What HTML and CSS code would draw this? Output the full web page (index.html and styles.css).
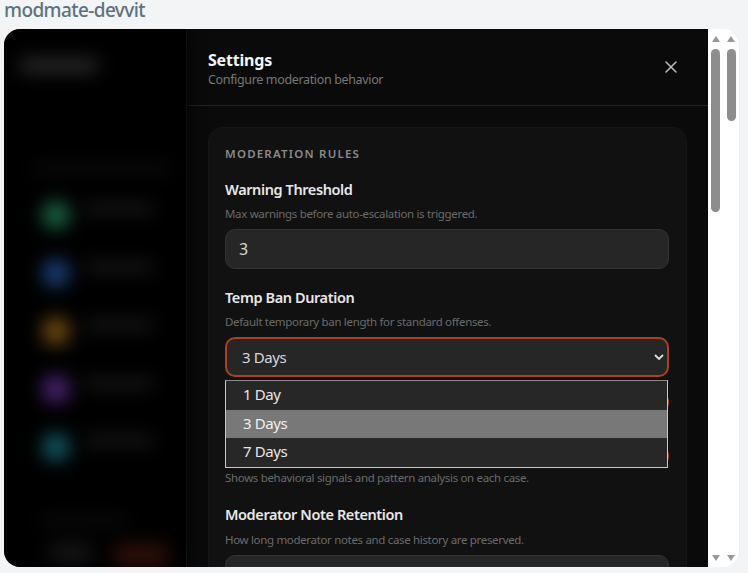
FILE: index.html
```html
<!DOCTYPE html>
<html lang="en">
<head>
<meta charset="utf-8">
<title>modmate-devvit</title>
<link rel="stylesheet" href="styles.css">
</head>
<body>
<h1 class="app-title">modmate-devvit</h1>
<div class="frame">
  <div class="app">
    <aside class="sidebar" aria-hidden="true">
      <div class="blur-logo"></div>
      <div class="blur-heading"></div>
      <div class="blur-list">
        <div class="blur-row"><span class="dot dot-green"></span><span class="bar"></span></div>
        <div class="blur-row"><span class="dot dot-blue"></span><span class="bar"></span></div>
        <div class="blur-row"><span class="dot dot-amber"></span><span class="bar"></span></div>
        <div class="blur-row"><span class="dot dot-purple"></span><span class="bar"></span></div>
        <div class="blur-row"><span class="dot dot-teal"></span><span class="bar"></span></div>
      </div>
      <div class="blur-foot"></div>
      <div class="blur-actions"><span class="btn-grey"></span><span class="btn-red"></span></div>
    </aside>
    <main class="panel">
      <header class="panel-head">
        <div>
          <h2 class="panel-title">Settings</h2>
          <p class="panel-sub">Configure moderation behavior</p>
        </div>
        <svg class="close" viewBox="0 0 12 12" width="12" height="12" aria-label="Close"><path d="M1 1l10 10M11 1L1 11"/></svg>
      </header>
      <div class="panel-body">
        <section class="card">
          <h3 class="card-title">MODERATION RULES</h3>
          <div class="field">
            <div class="label">Warning Threshold</div>
            <div class="hint">Max warnings before auto-escalation is triggered.</div>
            <input class="control control-number" value="3">
          </div>
          <div class="field">
            <div class="label">Temp Ban Duration</div>
            <div class="hint">Default temporary ban length for standard offenses.</div>
            <div class="select-wrap">
              <div class="control select" role="combobox" aria-expanded="true">
                <span>3 Days</span>
                <svg class="chevron" viewBox="0 0 10 7" width="10" height="7"><path d="M1 1l4 4 4-4"/></svg>
              </div>
              <ul class="popup">
                <li class="option">1 Day</li>
                <li class="option option-active">3 Days</li>
                <li class="option">7 Days</li>
              </ul>
            </div>
          </div>
          <div class="toggle-row toggle-row-first"><span class="toggle"></span></div>
          <div class="toggle-row toggle-row-second"><span class="toggle"></span></div>
          <div class="hint hint-toggle">Shows behavioral signals and pattern analysis on each case.</div>
          <div class="field field-last">
            <div class="label">Moderator Note Retention</div>
            <div class="hint">How long moderator notes and case history are preserved.</div>
            <input class="control">
          </div>
        </section>
      </div>
    </main>
  </div>
  <div class="scrollbar scrollbar-inner"><span class="arrow-up"></span><span class="thumb thumb-long"></span><span class="spacer"></span><span class="arrow-down"></span></div>
  <div class="scrollbar scrollbar-outer"><span class="arrow-up"></span><span class="thumb thumb-short"></span><span class="spacer"></span><span class="arrow-down"></span></div>
</div>
</body>
</html>
```

FILE: styles.css
```css
* { box-sizing: border-box; }
html, body { margin: 0; height: 100%; overflow: hidden; }
body {
  background: #f3f4f6;
  padding: 0 8px 6px 4px;
  font-family: "Noto Sans", "Open Sans", sans-serif;
  display: flex;
  flex-direction: column;
}
.app-title {
  margin: 0;
  height: 29px;
  font-size: 19px;
  line-height: 20px;
  letter-spacing: -0.6px;
  font-weight: 500;
  color: #5c7280;
  flex: none;
}
.frame {
  flex: 1;
  min-height: 0;
  display: flex;
  background: #fff;
  border-radius: 16px;
  overflow: hidden;
  border-right: 1px solid #eceef0;
}
.app { flex: 1; min-width: 0; display: flex; background: #000; }
.sidebar {
  width: 182px;
  flex: none;
  background: #000;
  display: flex;
  flex-direction: column;
  overflow: hidden;
  padding: 30px 0 0 16px;
  filter: blur(9px);
}
.blur-logo { width: 78px; height: 14px; background: #2e2e2e; border-radius: 4px; }
.blur-heading { width: 140px; height: 8px; margin: 93px 0 0 12px; background: #101010; }
.blur-list { display: flex; flex-direction: column; gap: 26px; margin: 27px 0 0 22px; }
.blur-row { display: flex; align-items: center; gap: 15px; height: 32px; }
.dot { width: 28px; height: 28px; border-radius: 50%; flex: none; }
.dot-green { background: #186443; }
.dot-blue { background: #1a3f78; }
.dot-amber { background: #6f4a10; }
.dot-purple { background: #492370; }
.dot-teal { background: #125663; }
.bar { width: 68px; height: 10px; margin-top: -12px; background: #1a1a1a; }
.blur-foot { width: 88px; height: 8px; margin: 54px 0 0 20px; background: #101010; }
.blur-actions { display: flex; gap: 22px; margin: 19px 0 0 30px; }
.btn-grey { width: 42px; height: 20px; background: #141414; }
.btn-red { width: 54px; height: 24px; background: #2c0e09; }
.panel {
  flex: 1;
  min-width: 0;
  background: #0a0a0a;
  border-left: 1px solid #1c1c1c;
  display: flex;
  flex-direction: column;
  overflow: hidden;
}
.panel-head {
  height: 77px;
  flex: none;
  display: flex;
  align-items: center;
  justify-content: space-between;
  padding: 2px 31px 0 21px;
  border-bottom: 1px solid #222;
}
.panel-title { margin: 0; font-size: 16px; line-height: 24px; font-weight: 700; letter-spacing: -0.2px; color: #f4f4f4; }
.panel-sub { margin: 0; font-size: 12.5px; line-height: 16px; letter-spacing: -0.35px; color: #777; }
.close { fill: none; stroke: #bdbdbd; stroke-width: 1.5; stroke-linecap: round; margin-bottom: 2px; }
.panel-body { flex: 1; min-height: 0; overflow: hidden; padding: 21px 21px 0; }
.card {
  background: #111;
  border: 1px solid #161616;
  border-radius: 14px;
  padding: 17px 17px 20px 16px;
}
.card-title {
  margin: 0 0 16px;
  font-size: 11.5px;
  line-height: 18px;
  font-weight: 600;
  letter-spacing: 1.2px;
  color: #8a8a8a;
}
.field { margin-bottom: 18px; }
.label { font-size: 14.5px; line-height: 20px; font-weight: 600; letter-spacing: -0.4px; color: #e8e8e8; }
.hint { font-size: 11.5px; line-height: 16px; margin: 7px 0 7px; letter-spacing: -0.33px; color: #6b6b6b; }
.control {
  display: block;
  width: 100%;
  height: 40px;
  border: 1px solid #333;
  border-radius: 10px;
  background: #262626;
  color: #d8d8d8;
  padding: 0 16px;
  font: 15px/38px "Noto Sans", "Open Sans", sans-serif;
  letter-spacing: -0.4px;
  outline: none;
}
.control-number { padding-left: 13px; font-size: 16px; }
.select-wrap { position: relative; }
.select {
  display: flex;
  align-items: center;
  justify-content: space-between;
  border: 2px solid #a8441a;
  padding: 0 3px 0 15px;
}
.chevron { fill: none; stroke: #e0e0e0; stroke-width: 1.8; }
.popup {
  position: absolute;
  z-index: 2;
  left: 0;
  top: 43px;
  width: 443px;
  margin: 0;
  padding: 0;
  list-style: none;
  border: 1px solid #c8c8c8;
  border-top-color: #8a8a8a;
  background: #272727;
}
.option { height: 28.67px; padding: 0 17px; font-size: 15px; line-height: 26px; letter-spacing: -0.4px; color: #e6e6e6; }
.option-active { background: #787878; color: #f0f0f0; }
.toggle-row { display: flex; justify-content: flex-end; }
.toggle { display: block; width: 31px; height: 24px; border-radius: 12px; background: #a8441a; }
.toggle-row-first { margin-top: -5px; }
.toggle-row-second { margin-top: 30px; }
.hint-toggle { margin: 2px 0 0; }
.field-last { margin: 18px 0 0; }
.field-last .hint { margin-top: 8px; }
.scrollbar {
  width: 15px;
  flex: none;
  display: flex;
  flex-direction: column;
  align-items: center;
  padding: 7px 0 6px;
}
.scrollbar-outer { width: 16px; }
.thumb { width: 9px; border-radius: 5px; background: #8d8d8d; margin-top: 7px; flex: none; }
.thumb-long { height: 163px; }
.thumb-short { height: 72px; }
.spacer { flex: 1; }
.arrow-up, .arrow-down { width: 0; height: 0; border-left: 4px solid transparent; border-right: 4px solid transparent; flex: none; }
.arrow-up { border-bottom: 6px solid #999; }
.arrow-down { border-top: 6px solid #999; }
```
